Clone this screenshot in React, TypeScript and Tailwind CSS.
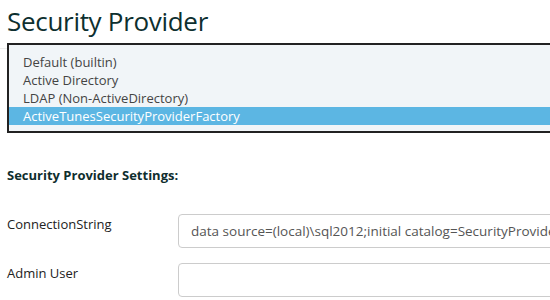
const providers = [
  "Default (builtin)",
  "Active Directory",
  "LDAP (Non-ActiveDirectory)",
  "ActiveTunesSecurityProviderFactory",
];

const selected = 3;

export default function App() {
  return (
    <div
      className="w-[550px] h-[300px] overflow-hidden bg-white"
      style={{ fontFamily: '"Open Sans", "Noto Sans", sans-serif' }}
    >
      <h1 className="pl-[7px] pt-[1px] h-[49px] border-b border-[#eeeeee] text-[26px] leading-[40px] text-[#0d2f2f] tracking-[-0.3px]">
        Security Provider
      </h1>

      <div className="relative -mt-[6px] ml-[7px] w-[600px] h-[90px] border-2 border-[#222222] bg-[#f1f5f8] pt-[8px]">
        {providers.map((p, i) => (
          <div
            key={p}
            className={
              i === selected
                ? "h-[18px] pl-[14px] text-[13px] leading-[18px] bg-[#5cb6e3] text-white"
                : "h-[18px] pl-[14px] text-[13px] leading-[18px] text-[#444444]"
            }
          >
            {p}
          </div>
        ))}
      </div>

      <h3 className="pl-[7px] mt-[33px] text-[13px] leading-[18px] font-bold text-[#0f2e2e]">
        Security Provider Settings:
      </h3>

      <div className="mt-[30px] flex flex-col gap-[15px]">
        <div className="flex items-start">
          <label className="w-[178px] shrink-0 pl-[7px] pt-[1px] text-[13px] leading-[18px] text-[#222222]">
            ConnectionString
          </label>
          <div className="w-[400px] shrink-0 h-[34px] rounded-[4px] border border-[#cccccc] pl-[12px] text-[13.5px] leading-[32px] text-[#555555] whitespace-nowrap overflow-hidden">
            data source=(local)\sql2012;initial catalog=SecurityProvider
          </div>
        </div>
        <div className="flex items-start">
          <label className="w-[178px] shrink-0 pl-[7px] pt-[1px] text-[13px] leading-[18px] text-[#222222]">
            Admin User
          </label>
          <div className="w-[400px] shrink-0 h-[34px] rounded-[4px] border border-[#cccccc]" />
        </div>
      </div>
    </div>
  );
}
